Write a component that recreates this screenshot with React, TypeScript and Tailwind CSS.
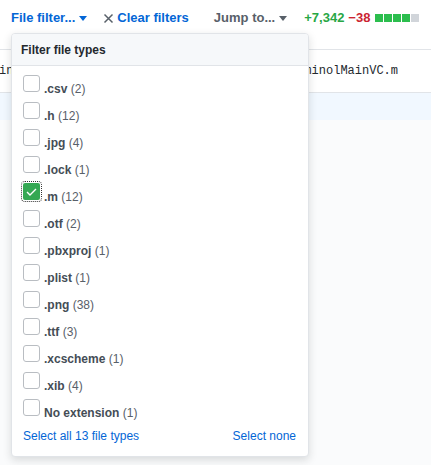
import { useState } from 'react';

type FileType = { ext: string; count: number };

const fileTypes: FileType[] = [
  { ext: '.csv', count: 2 },
  { ext: '.h', count: 12 },
  { ext: '.jpg', count: 4 },
  { ext: '.lock', count: 1 },
  { ext: '.m', count: 12 },
  { ext: '.otf', count: 2 },
  { ext: '.pbxproj', count: 1 },
  { ext: '.plist', count: 1 },
  { ext: '.png', count: 38 },
  { ext: '.ttf', count: 3 },
  { ext: '.xcscheme', count: 1 },
  { ext: '.xib', count: 4 },
  { ext: 'No extension', count: 1 },
];

const Caret = () => (
  <svg width="8" height="5" viewBox="0 0 8 5" className="ml-[4px] mt-[1px]">
    <path d="M0 0h8L4 5z" fill="currentColor" />
  </svg>
);

const Checkbox = ({ checked }: { checked: boolean }) =>
  checked ? (
    <span className="flex h-[17px] w-[17px] shrink-0 items-center justify-center rounded-[2px] bg-[#34a853] outline-1 outline-dotted outline-offset-1 outline-[#333]">
      <svg width="11" height="8" viewBox="0 0 11 8">
        <path d="M1 4l3 3 6-6" stroke="#fff" strokeWidth="1.4" fill="none" />
      </svg>
    </span>
  ) : (
    <span className="h-[17px] w-[17px] shrink-0 rounded-[3px] border border-[#b9bdc2] bg-white" />
  );

export default function App() {
  const [selected, setSelected] = useState<string[]>(['.m']);

  const toggle = (ext: string) =>
    setSelected(s => (s.includes(ext) ? s.filter(e => e !== ext) : [...s, ext]));

  return (
    <div className="relative h-[465px] w-[431px] overflow-hidden bg-[#fafbfc] font-['Liberation_Sans',Arial,sans-serif] text-[13px]">
      {/* toolbar */}
      <div className="flex h-[49px] items-start bg-white pt-[9px] pl-[11px] font-bold">
        <button className="flex h-[18px] items-center text-[#0366d6]">
          File filter... <Caret />
        </button>
        <button className="ml-[16px] flex h-[18px] items-center text-[#0366d6]">
          <svg width="11" height="11" viewBox="0 0 11 11" className="mr-[3px]">
            <path d="M1.5 1.5l8 8M9.5 1.5l-8 8" stroke="#586069" strokeWidth="1.5" />
          </svg>
          Clear filters
        </button>
        <button className="ml-[25px] flex h-[18px] items-center text-[#586069]">
          Jump to... <Caret />
        </button>
        <div className="ml-[17px] flex h-[18px] items-center">
          <span className="text-[#28a745]">+7,342</span>
          <span className="ml-[4px] text-[#cb2431]">−38</span>
          <span className="ml-[5px] flex gap-[1px]">
            <span className="h-[8px] w-[8px] bg-[#2cbe4e]" />
            <span className="h-[8px] w-[8px] bg-[#2cbe4e]" />
            <span className="h-[8px] w-[8px] bg-[#2cbe4e]" />
            <span className="h-[8px] w-[8px] bg-[#2cbe4e]" />
            <span className="h-[8px] w-[8px] bg-[#d1d5da]" />
          </span>
        </div>
      </div>

      {/* file header */}
      <div className="flex h-[44px] items-center border-y border-[#e1e4e8] bg-white font-['Liberation_Mono',monospace] text-[12px] text-[#24292e]">
        <span className="ml-[-1px]">in</span>
        <span className="ml-auto mr-[33px]">LuminolMainVC.m</span>
      </div>
      <div className="h-[27px] bg-[#f1f8ff]" />

      {/* dropdown */}
      <div className="absolute left-[11px] top-[33px] w-[298px] overflow-hidden rounded-[4px] border border-[#e1e4e8] bg-white text-[12px] shadow-[0_3px_8px_rgba(27,31,35,0.15)]">
        <div className="flex h-[32px] items-center border-b border-[#e1e4e8] bg-[#f6f8fa] px-[9px] font-bold text-[#24292e]">
          Filter file types
        </div>
        <div className="px-[11px] pt-[9px]">
          {fileTypes.map(t => (
            <label
              key={t.ext}
              onClick={() => toggle(t.ext)}
              className="flex h-[27px] cursor-pointer items-start"
            >
              <Checkbox checked={selected.includes(t.ext)} />
              <span className="ml-[4px] mt-[5px] leading-[18px]">
                <span className="font-bold text-[#444d56]">{t.ext}</span>{' '}
                <span className="text-[#586069]">({t.count})</span>
              </span>
            </label>
          ))}
        </div>
        <div className="flex h-[30px] items-start justify-between px-[11px] pt-[1px] pr-[12px] leading-[18px] text-[#0366d6]">
          <button>Select all 13 file types</button>
          <button>Select none</button>
        </div>
      </div>
    </div>
  );
}
